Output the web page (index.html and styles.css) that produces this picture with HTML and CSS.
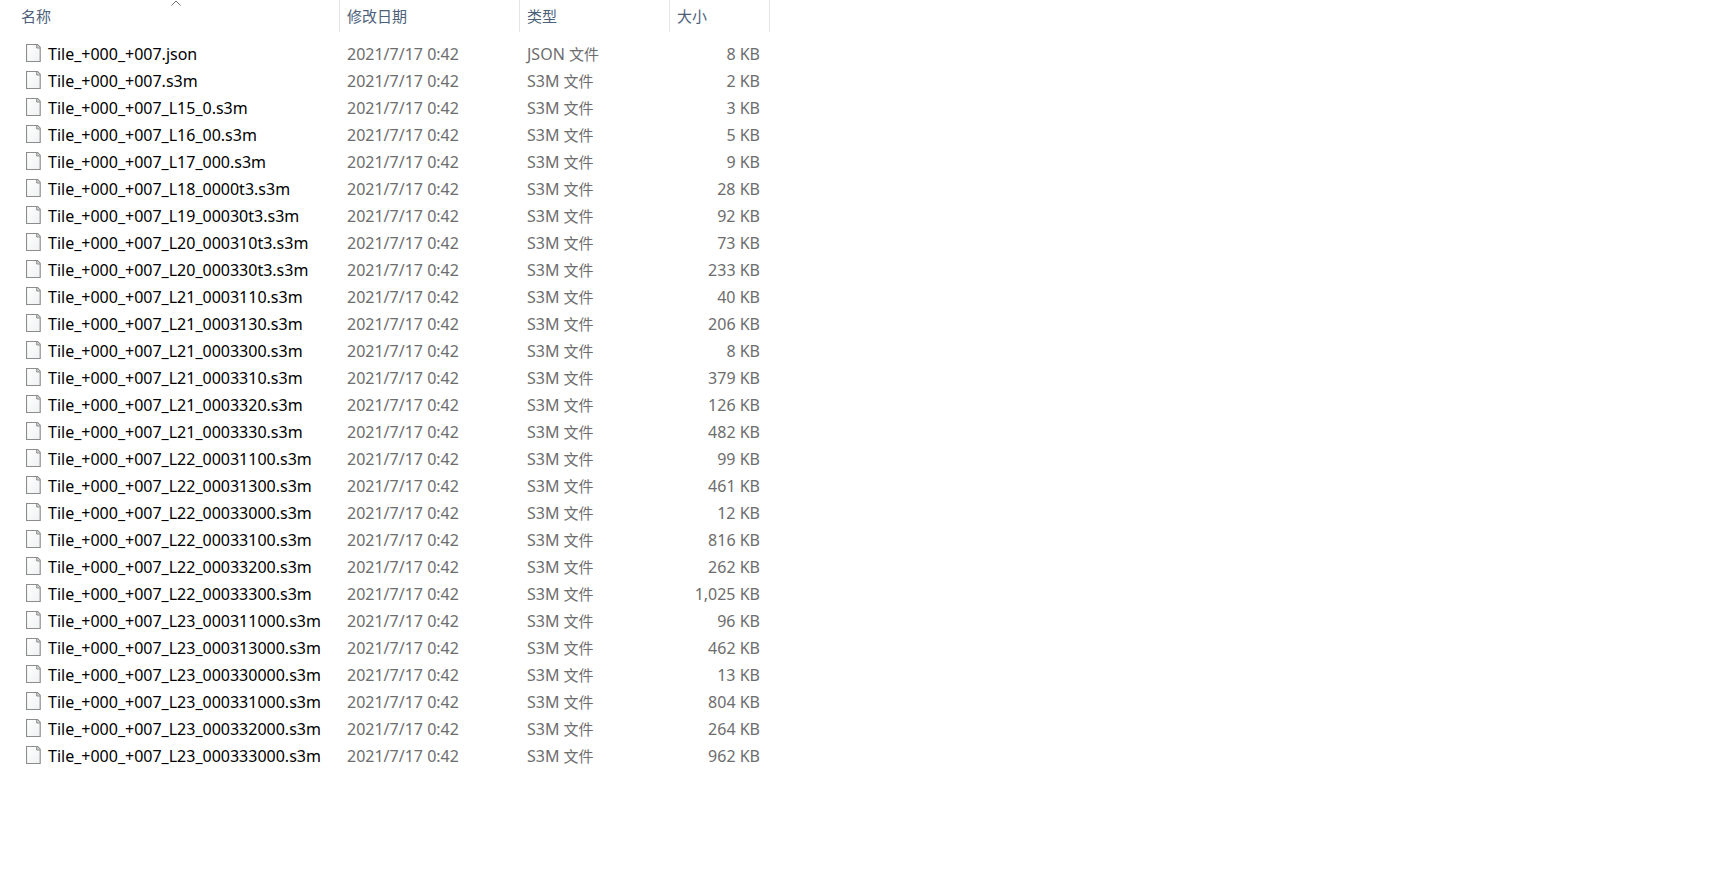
FILE: index.html
```html
<!DOCTYPE html>
<html lang="zh-CN">
<head>
<meta charset="utf-8">
<title>文件列表</title>
<link rel="stylesheet" href="styles.css">
</head>
<body>
<svg class="sprite" aria-hidden="true">
<linearGradient id="paper" x1="0" y1="0" x2="1" y2="1"><stop offset="0" stop-color="#fff"/><stop offset="1" stop-color="#eff1f2"/></linearGradient>
<symbol id="doc" viewBox="0 0 15 18"><path d="M.5 .5H11.500L14.200 3.200V17.500H.5Z" fill="url(#paper)" stroke="#8c8c8c" stroke-width="1.150"/><path d="M10.700 .7V4H14" fill="#d4d4d4" stroke="#8c8c8c"/></symbol>
</svg>
<main>
<table class="files">
<colgroup><col class="col-name"><col class="col-date"><col class="col-type"><col class="col-size"></colgroup>
<thead><tr>
<th scope="col" aria-sort="ascending"><button class="sort" type="button">名称</button><svg class="arrow" viewBox="0 0 10 6" aria-hidden="true"><path d="M.5 5.500L5 1L9.500 5.500"/></svg></th>
<th scope="col"><button class="sort" type="button">修改日期</button></th>
<th scope="col"><button class="sort" type="button">类型</button></th>
<th scope="col"><button class="sort" type="button">大小</button></th>
</tr></thead>
<tbody>
<tr><td><div class="name"><svg class="icon"><use href="#doc"/></svg>Tile_+000_+007.json</div></td><td>2021/7/17 0:42</td><td>JSON <span class="han">文件</span></td><td>8 KB</td></tr>
<tr><td><div class="name"><svg class="icon"><use href="#doc"/></svg>Tile_+000_+007.s3m</div></td><td>2021/7/17 0:42</td><td>S3M <span class="han">文件</span></td><td>2 KB</td></tr>
<tr><td><div class="name"><svg class="icon"><use href="#doc"/></svg>Tile_+000_+007_L15_0.s3m</div></td><td>2021/7/17 0:42</td><td>S3M <span class="han">文件</span></td><td>3 KB</td></tr>
<tr><td><div class="name"><svg class="icon"><use href="#doc"/></svg>Tile_+000_+007_L16_00.s3m</div></td><td>2021/7/17 0:42</td><td>S3M <span class="han">文件</span></td><td>5 KB</td></tr>
<tr><td><div class="name"><svg class="icon"><use href="#doc"/></svg>Tile_+000_+007_L17_000.s3m</div></td><td>2021/7/17 0:42</td><td>S3M <span class="han">文件</span></td><td>9 KB</td></tr>
<tr><td><div class="name"><svg class="icon"><use href="#doc"/></svg>Tile_+000_+007_L18_0000t3.s3m</div></td><td>2021/7/17 0:42</td><td>S3M <span class="han">文件</span></td><td>28 KB</td></tr>
<tr><td><div class="name"><svg class="icon"><use href="#doc"/></svg>Tile_+000_+007_L19_00030t3.s3m</div></td><td>2021/7/17 0:42</td><td>S3M <span class="han">文件</span></td><td>92 KB</td></tr>
<tr><td><div class="name"><svg class="icon"><use href="#doc"/></svg>Tile_+000_+007_L20_000310t3.s3m</div></td><td>2021/7/17 0:42</td><td>S3M <span class="han">文件</span></td><td>73 KB</td></tr>
<tr><td><div class="name"><svg class="icon"><use href="#doc"/></svg>Tile_+000_+007_L20_000330t3.s3m</div></td><td>2021/7/17 0:42</td><td>S3M <span class="han">文件</span></td><td>233 KB</td></tr>
<tr><td><div class="name"><svg class="icon"><use href="#doc"/></svg>Tile_+000_+007_L21_0003110.s3m</div></td><td>2021/7/17 0:42</td><td>S3M <span class="han">文件</span></td><td>40 KB</td></tr>
<tr><td><div class="name"><svg class="icon"><use href="#doc"/></svg>Tile_+000_+007_L21_0003130.s3m</div></td><td>2021/7/17 0:42</td><td>S3M <span class="han">文件</span></td><td>206 KB</td></tr>
<tr><td><div class="name"><svg class="icon"><use href="#doc"/></svg>Tile_+000_+007_L21_0003300.s3m</div></td><td>2021/7/17 0:42</td><td>S3M <span class="han">文件</span></td><td>8 KB</td></tr>
<tr><td><div class="name"><svg class="icon"><use href="#doc"/></svg>Tile_+000_+007_L21_0003310.s3m</div></td><td>2021/7/17 0:42</td><td>S3M <span class="han">文件</span></td><td>379 KB</td></tr>
<tr><td><div class="name"><svg class="icon"><use href="#doc"/></svg>Tile_+000_+007_L21_0003320.s3m</div></td><td>2021/7/17 0:42</td><td>S3M <span class="han">文件</span></td><td>126 KB</td></tr>
<tr><td><div class="name"><svg class="icon"><use href="#doc"/></svg>Tile_+000_+007_L21_0003330.s3m</div></td><td>2021/7/17 0:42</td><td>S3M <span class="han">文件</span></td><td>482 KB</td></tr>
<tr><td><div class="name"><svg class="icon"><use href="#doc"/></svg>Tile_+000_+007_L22_00031100.s3m</div></td><td>2021/7/17 0:42</td><td>S3M <span class="han">文件</span></td><td>99 KB</td></tr>
<tr><td><div class="name"><svg class="icon"><use href="#doc"/></svg>Tile_+000_+007_L22_00031300.s3m</div></td><td>2021/7/17 0:42</td><td>S3M <span class="han">文件</span></td><td>461 KB</td></tr>
<tr><td><div class="name"><svg class="icon"><use href="#doc"/></svg>Tile_+000_+007_L22_00033000.s3m</div></td><td>2021/7/17 0:42</td><td>S3M <span class="han">文件</span></td><td>12 KB</td></tr>
<tr><td><div class="name"><svg class="icon"><use href="#doc"/></svg>Tile_+000_+007_L22_00033100.s3m</div></td><td>2021/7/17 0:42</td><td>S3M <span class="han">文件</span></td><td>816 KB</td></tr>
<tr><td><div class="name"><svg class="icon"><use href="#doc"/></svg>Tile_+000_+007_L22_00033200.s3m</div></td><td>2021/7/17 0:42</td><td>S3M <span class="han">文件</span></td><td>262 KB</td></tr>
<tr><td><div class="name"><svg class="icon"><use href="#doc"/></svg>Tile_+000_+007_L22_00033300.s3m</div></td><td>2021/7/17 0:42</td><td>S3M <span class="han">文件</span></td><td>1,025 KB</td></tr>
<tr><td><div class="name"><svg class="icon"><use href="#doc"/></svg>Tile_+000_+007_L23_000311000.s3m</div></td><td>2021/7/17 0:42</td><td>S3M <span class="han">文件</span></td><td>96 KB</td></tr>
<tr><td><div class="name"><svg class="icon"><use href="#doc"/></svg>Tile_+000_+007_L23_000313000.s3m</div></td><td>2021/7/17 0:42</td><td>S3M <span class="han">文件</span></td><td>462 KB</td></tr>
<tr><td><div class="name"><svg class="icon"><use href="#doc"/></svg>Tile_+000_+007_L23_000330000.s3m</div></td><td>2021/7/17 0:42</td><td>S3M <span class="han">文件</span></td><td>13 KB</td></tr>
<tr><td><div class="name"><svg class="icon"><use href="#doc"/></svg>Tile_+000_+007_L23_000331000.s3m</div></td><td>2021/7/17 0:42</td><td>S3M <span class="han">文件</span></td><td>804 KB</td></tr>
<tr><td><div class="name"><svg class="icon"><use href="#doc"/></svg>Tile_+000_+007_L23_000332000.s3m</div></td><td>2021/7/17 0:42</td><td>S3M <span class="han">文件</span></td><td>264 KB</td></tr>
<tr><td><div class="name"><svg class="icon"><use href="#doc"/></svg>Tile_+000_+007_L23_000333000.s3m</div></td><td>2021/7/17 0:42</td><td>S3M <span class="han">文件</span></td><td>962 KB</td></tr>
</tbody>
</table>
</main>
</body>
</html>
```

FILE: styles.css
```css
body {
  margin: 0;
  background: #fff;
  color: #6d6d6d;
  font: 16px/27px "Noto Sans", "Noto Sans CJK SC", sans-serif;
}

.sprite {
  position: absolute;
  width: 0;
  height: 0;
}

.files {
  table-layout: fixed;
  width: 770px;
  border-collapse: separate;
  border-spacing: 0;
}

.col-name { width: 340px; }
.col-date { width: 180px; }
.col-type { width: 150px; }
.col-size { width: 100px; }

th {
  position: relative;
  height: 32px;
  padding: 0;
  border-right: 1px solid #e5e5e5;
  vertical-align: top;
}

/* space between the header bar and the first file */
tbody::before {
  content: "";
  display: block;
  height: 9px;
}

.sort {
  display: block;
  width: 100%;
  padding: 0 7px;
  border: 0;
  background: none;
  color: #4c607a;
  font: 15px/32px "Noto Sans CJK SC", sans-serif;
  text-align: left;
}

th:first-child .sort { padding-left: 21px; }

.arrow {
  position: absolute;
  top: 0;
  left: 171px;
  width: 10px;
  height: 6px;
  fill: none;
  stroke: #6d6d6d;
}

td {
  height: 27px;
  padding: 0 7px;
  white-space: nowrap;
}

td:first-child {
  padding-left: 26px;
  color: #000;
}

td:last-child {
  padding-right: 10px;
  text-align: right;
}

.name {
  display: flex;
  align-items: center;
  gap: 7px;
}

.icon {
  width: 15px;
  height: 18px;
  margin-bottom: 3px;
}

.han {
  font-size: 15px;
  line-height: 1;
}
```
